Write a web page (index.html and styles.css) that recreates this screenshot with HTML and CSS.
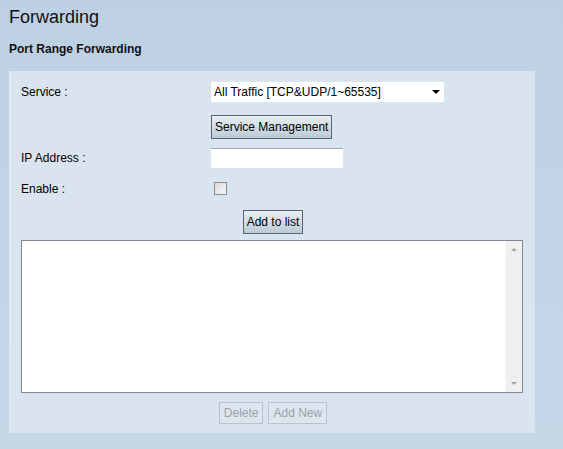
FILE: index.html
```html
<!DOCTYPE html>
<html lang="en">
<head>
    <meta charset="UTF-8">
    <title>Forwarding</title>
    <link rel="stylesheet" href="styles.css">
</head>
<body>
    <h1 class="title">Forwarding</h1>
    <h2 class="subtitle">Port Range Forwarding</h2>
    <div class="panel">
        <div class="row row-service">
            <label class="label">Service :</label>
            <span class="select-wrap">
                <select class="select">
                    <option>All Traffic [TCP&amp;UDP/1~65535]</option>
                </select>
            </span>
        </div>
        <div class="row row-manage">
            <span class="label"></span>
            <button class="button">Service Management</button>
        </div>
        <div class="row row-ip">
            <label class="label">IP Address :</label>
            <input type="text" class="text-input">
        </div>
        <div class="row row-enable">
            <label class="label">Enable :</label>
            <span class="checkbox"></span>
        </div>
        <div class="center row-add">
            <button class="button">Add to list</button>
        </div>
        <div class="listbox">
            <div class="list-body"></div>
            <div class="scrollbar">
                <span class="arrow-up"></span>
                <span class="arrow-down"></span>
            </div>
        </div>
        <div class="center row-actions">
            <button class="button disabled">Delete</button>
            <button class="button disabled">Add New</button>
        </div>
    </div>
</body>
</html>
```

FILE: styles.css
```css
body {
    margin: 0;
    height: 449px;
    font-family: "Liberation Sans", Arial, sans-serif;
    font-size: 12px;
    color: #000;
    background: linear-gradient(to bottom, #bdd0e4, #c6d7e8);
    overflow: hidden;
}
.title {
    margin: 7px 0 0 9px;
    font-size: 18px;
    font-weight: normal;
    line-height: 20px;
    color: #111;
}
.subtitle {
    margin: 15px 0 0 9px;
    font-size: 12px;
    font-weight: bold;
    line-height: 14px;
    color: #111;
}
.panel {
    width: 526px;
    height: 362px;
    box-sizing: border-box;
    margin: 15px 0 0 9px;
    padding: 11px 10px 0 10px;
    background-color: #d9e4ef;
    border-left: 2px solid #e0eaf3;
}
.row {
    display: flex;
    align-items: center;
}
.label {
    width: 190px;
    flex-shrink: 0;
}
.row-service { height: 20px; }
.row-manage { height: 24px; margin-top: 13px; }
.row-ip { height: 20px; margin-top: 9px; }
.row-enable { height: 13px; margin-top: 14px; }
.select-wrap {
    position: relative;
    display: block;
    width: 233px;
    height: 20px;
    background: #fff;
}
.select-wrap::after {
    content: "";
    position: absolute;
    right: 4px;
    top: 8px;
    border-left: 4px solid transparent;
    border-right: 4px solid transparent;
    border-top: 4px solid #000;
}
.select {
    appearance: none;
    -webkit-appearance: none;
    width: 100%;
    height: 20px;
    margin: 0;
    padding: 0 0 0 3px;
    border: none;
    background: transparent;
    font-family: inherit;
    font-size: 12px;
    color: #000;
}
.text-input {
    width: 132px;
    height: 20px;
    box-sizing: border-box;
    margin: 0;
    padding: 0 3px;
    border: none;
    border-top: 1px solid #a3acb5;
    background: #fff;
    font-family: inherit;
    font-size: 12px;
}
.checkbox {
    display: block;
    width: 11px;
    height: 11px;
    margin-left: 3px;
    border: 1px solid #8a8f94;
    background: linear-gradient(135deg, #dcdcdc, #f6f6f6);
}
.button {
    height: 24px;
    margin: 0;
    padding: 0 3px;
    border: 1px solid #566370;
    background: linear-gradient(to bottom, #e9eff4, #bccad6);
    font-family: inherit;
    font-size: 12px;
    color: #000;
}
.button.disabled {
    height: 22px;
    padding: 0 4px;
    border-color: #b9c3cc;
    background: #dce6ef;
    color: #9aa2aa;
}
.center {
    display: flex;
    justify-content: center;
    gap: 5px;
}
.row-add { margin-top: 15px; }
.listbox {
    display: flex;
    width: 502px;
    height: 153px;
    box-sizing: border-box;
    margin-top: 6px;
    border: 1px solid #7c8893;
    background: #fff;
}
.list-body { flex: 1; }
.scrollbar {
    position: relative;
    width: 16px;
    background: #f0f0f0;
    border-left: 1px solid #f6f6f6;
}
.arrow-up, .arrow-down {
    position: absolute;
    left: 5px;
    border-left: 3px solid transparent;
    border-right: 3px solid transparent;
}
.arrow-up {
    top: 7px;
    border-bottom: 3px solid #a3a3a3;
}
.arrow-down {
    bottom: 7px;
    border-top: 3px solid #a3a3a3;
}
.row-actions { margin-top: 9px; }
```
